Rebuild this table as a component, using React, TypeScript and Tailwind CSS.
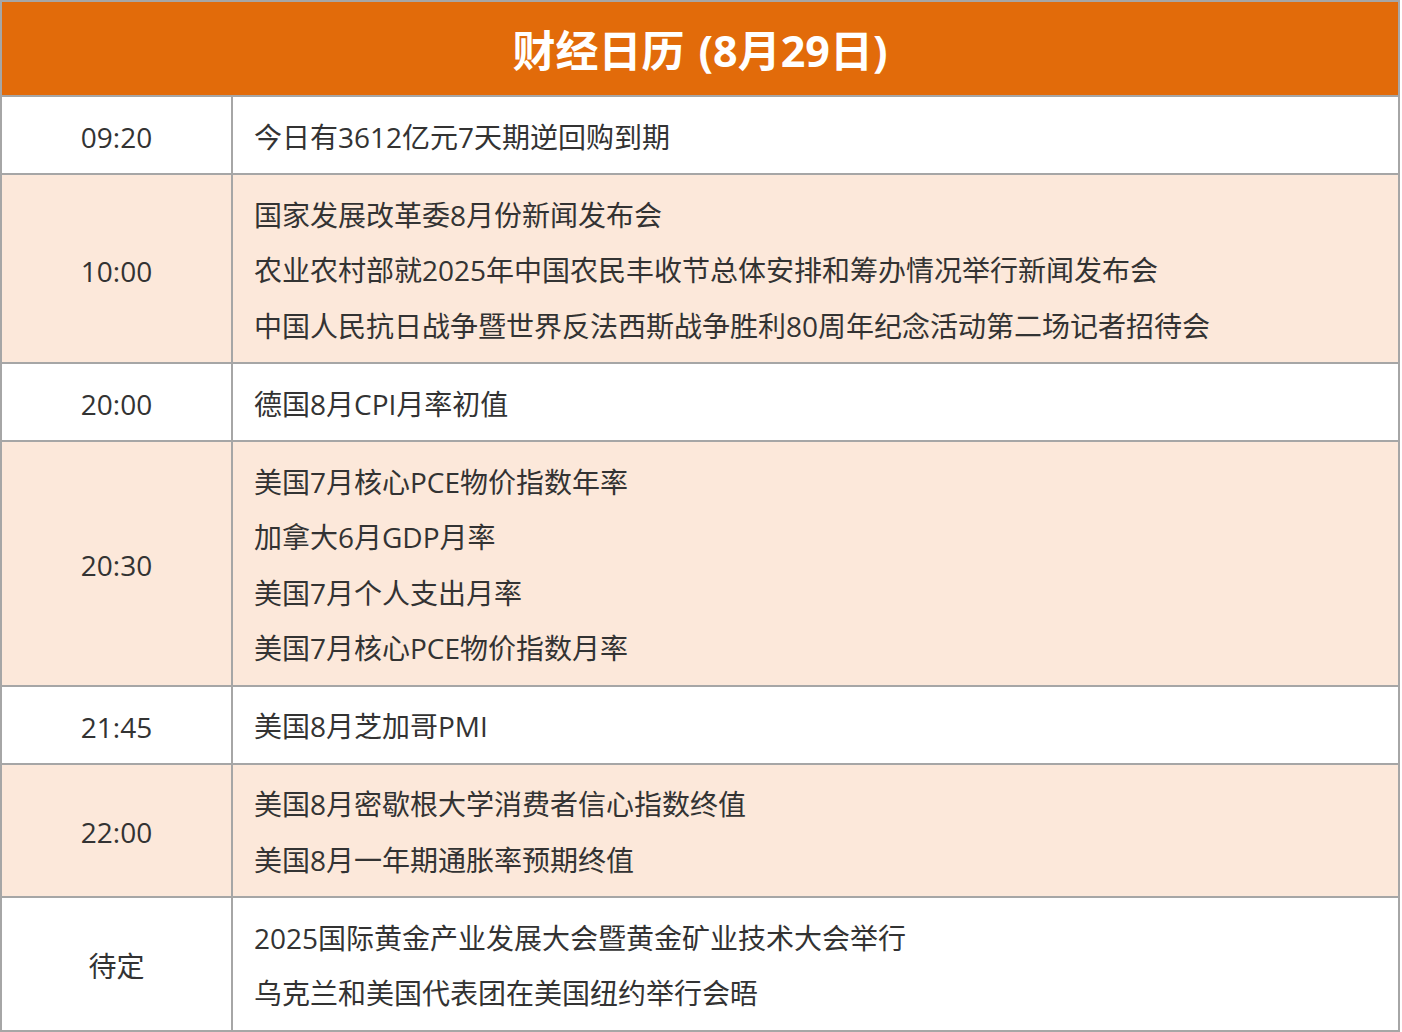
const rows: { time: string; items: string[]; shaded: boolean }[] = [
  { time: "09:20", items: ["今日有3612亿元7天期逆回购到期"], shaded: false },
  {
    time: "10:00",
    items: [
      "国家发展改革委8月份新闻发布会",
      "农业农村部就2025年中国农民丰收节总体安排和筹办情况举行新闻发布会",
      "中国人民抗日战争暨世界反法西斯战争胜利80周年纪念活动第二场记者招待会",
    ],
    shaded: true,
  },
  { time: "20:00", items: ["德国8月CPI月率初值"], shaded: false },
  {
    time: "20:30",
    items: [
      "美国7月核心PCE物价指数年率",
      "加拿大6月GDP月率",
      "美国7月个人支出月率",
      "美国7月核心PCE物价指数月率",
    ],
    shaded: true,
  },
  { time: "21:45", items: ["美国8月芝加哥PMI"], shaded: false },
  {
    time: "22:00",
    items: ["美国8月密歇根大学消费者信心指数终值", "美国8月一年期通胀率预期终值"],
    shaded: true,
  },
  {
    time: "待定",
    items: ["2025国际黄金产业发展大会暨黄金矿业技术大会举行", "乌克兰和美国代表团在美国纽约举行会晤"],
    shaded: false,
  },
];

export default function App() {
  return (
    <div className="w-[1402px] bg-white font-['Open_Sans','Noto_Sans_CJK_SC',sans-serif] text-[#333333]">
      <div className="flex w-[1400px] flex-col border-2 border-[#a6a6a6]">
        {/* title bar */}
        <div className="flex h-[93px] items-center justify-center gap-[14px] bg-[#e26b0a] pt-[6px] text-[43px] font-bold text-white">
          <span>财经日历</span>
          <span>(8月29日)</span>
        </div>

        {rows.map((r) => (
          <div
            key={r.time}
            className={`flex border-t-2 border-[#a6a6a6] ${r.shaded ? "bg-[#fce8da]" : "bg-white"}`}
          >
            <div className="flex w-[231px] shrink-0 items-center justify-center border-r-2 border-[#a6a6a6] pt-[4px] text-[28px]">
              {r.time}
            </div>
            <div className="flex-1 pt-[12.5px] pb-[8px] pl-[21px] text-[28px] leading-[55.5px]">
              {r.items.map((t) => (
                <div key={t} className="whitespace-nowrap">
                  {t}
                </div>
              ))}
            </div>
          </div>
        ))}
      </div>
    </div>
  );
}
